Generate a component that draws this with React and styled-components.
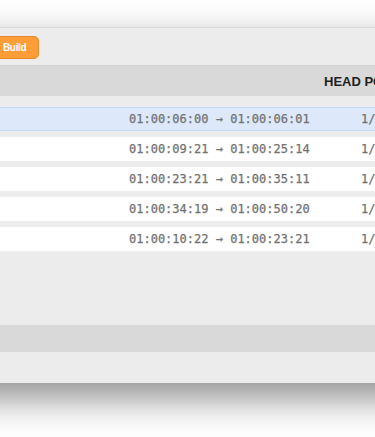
import React from "react";
import styled, { createGlobalStyle } from "styled-components";

const Global = createGlobalStyle`
  html, body {
    margin: 0;
    padding: 0;
    background: #ffffff;
  }
  body {
    font-family: "Liberation Sans", Arial, sans-serif;
  }
`;

const Stage = styled.div`
  width: 375px;
  height: 437px;
  overflow: hidden;
  background: #ffffff;
  padding-top: 27px;
  box-sizing: border-box;
`;

const Window = styled.div`
  width: 480px;
  margin-left: -40px;
  height: 355px;
  display: flex;
  flex-direction: column;
  background: #ececec;
  border-top: 1px solid #dadada;
  box-shadow: 0 15px 35px rgba(0, 0, 0, 0.45);
`;

const Toolbar = styled.div`
  height: 38px;
  display: flex;
  align-items: center;
  padding-left: 29px;
  background: #ececec;
  border-bottom: 1px solid #d2d2d2;
  box-sizing: border-box;
`;

const ToolButton = styled.button`
  height: 23px;
  padding: 0 12px 0 13px;
  border-radius: 5px;
  border: 1px solid #e48a2a;
  background: #fd9d37;
  color: #ffffff;
  font-family: "Liberation Sans", Arial, sans-serif;
  font-weight: bold;
  font-size: 10px;
  letter-spacing: -0.35px;
  margin-top: 1px;
`;

const HeaderBar = styled.div`
  height: 30px;
  display: grid;
  grid-template-columns: 364px 1fr;
  align-items: center;
  background: #d9d9d9;
`;

const HeaderLabel = styled.div`
  font-size: 13px;
  font-weight: bold;
  color: #1f1f1f;
  white-space: nowrap;
`;

const List = styled.div`
  flex: 1;
  display: flex;
  flex-direction: column;
  gap: 6px;
  padding-top: 11px;
`;

const Row = styled.div`
  height: 24px;
  box-sizing: border-box;
  display: grid;
  grid-template-columns: 169px 232px 1fr;
  align-items: center;
  background: ${(p) => (p.$selected ? "#dde9fb" : "#ffffff")};
  border-top: 1px solid ${(p) => (p.$selected ? "#c6daf6" : "#ffffff")};
  border-bottom: 1px solid ${(p) => (p.$selected ? "#c6daf6" : "#ffffff")};
`;

const Mono = styled.span`
  font-family: "DejaVu Sans Mono", "Liberation Mono", monospace;
  font-size: 12px;
  color: #727272;
  -webkit-text-stroke: 0.25px #727272;
  white-space: nowrap;
`;

const FooterBar = styled.div`
  height: 27px;
  background: #d9d9d9;
`;

const FooterSpace = styled.div`
  height: 31px;
  background: #ececec;
`;

const rows = [
  { from: "01:00:06:00", to: "01:00:06:01", selected: true },
  { from: "01:00:09:21", to: "01:00:25:14" },
  { from: "01:00:23:21", to: "01:00:35:11" },
  { from: "01:00:34:19", to: "01:00:50:20" },
  { from: "01:00:10:22", to: "01:00:23:21" },
];

export default function App() {
  return (
    <Stage>
      <Global />
      <Window>
        <Toolbar>
          <ToolButton>Build</ToolButton>
        </Toolbar>
        <HeaderBar>
          <span />
          <HeaderLabel>HEAD POSITION</HeaderLabel>
        </HeaderBar>
        <List>
          {rows.map((r, i) => (
            <Row key={i} $selected={r.selected}>
              <span />
              <Mono>
                {r.from} → {r.to}
              </Mono>
              <Mono>1/1</Mono>
            </Row>
          ))}
        </List>
        <FooterBar />
        <FooterSpace />
      </Window>
    </Stage>
  );
}
